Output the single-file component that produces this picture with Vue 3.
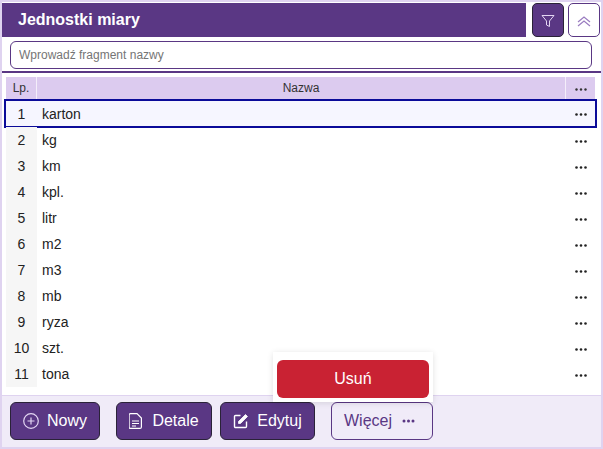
<template>
  <div class="window">
    <div class="top">
      <div class="title">Jednostki miary</div>
      <button class="icon-btn dark">
        <svg width="16" height="16" viewBox="0 0 16 16" fill="none" stroke="#e3d6f3" stroke-width="1">
          <path d="M2 3.500h12l-4.500 5.500v5.500l-3-1.500v-4z" />
        </svg>
      </button>
      <button class="icon-btn light">
        <svg width="16" height="16" viewBox="0 0 16 16" fill="none" stroke="#9a7cc0" stroke-width="1.200">
          <path d="M2 10l6-5 6 5M2 14l6-5 6 5" />
        </svg>
      </button>
    </div>
    <div class="search">
      <input class="search-input" placeholder="Wprowadź fragment nazwy" />
    </div>
    <div class="table">
      <div class="row head">
        <div class="cell lp">Lp.</div>
        <div class="cell name">Nazwa</div>
        <div class="cell more">
          <svg width="12" height="3" viewBox="0 0 12 3" fill="#333">
            <circle cx="1.500" cy="1.500" r="1.200" /><circle cx="6" cy="1.500" r="1.200" /><circle cx="10.500" cy="1.500" r="1.200" />
          </svg>
        </div>
      </div>
      <div v-for="(item, i) in items" :key="item" class="row" :class="{ selected: i === 0 }">
        <div class="cell lp">{{ i + 1 }}</div>
        <div class="cell name">{{ item }}</div>
        <div class="cell more">
          <svg width="12" height="3" viewBox="0 0 12 3" fill="#222">
            <circle cx="1.500" cy="1.500" r="1.300" /><circle cx="6" cy="1.500" r="1.300" /><circle cx="10.500" cy="1.500" r="1.300" />
          </svg>
        </div>
      </div>
    </div>
    <div class="footer">
      <button class="btn primary nowy">
        <svg width="16" height="16" viewBox="0 0 16 16" fill="none" stroke="#e3d6f3" stroke-width="1.200">
          <circle cx="8" cy="8" r="7.300" />
          <path d="M8 4.500v7M4.500 8h7" />
        </svg>
        Nowy
      </button>
      <button class="btn primary detale">
        <svg width="13" height="16" viewBox="0 0 13 16" fill="none" stroke="#fff" stroke-width="1.200">
          <path d="M1.500 .6h6.500l4.400 4.400v8.900a1.500 1.500 0 0 1-1.500 1.500h-9.400a1.500 1.500 0 0 1-1.400-1.500v-12.300a1.500 1.500 0 0 1 1.400-1z" />
          <path d="M3 8h7M3 10.500h7M3 13h4" />
        </svg>
        Detale
      </button>
      <button class="btn primary edytuj">
        <svg width="16" height="16" viewBox="0 0 16 16" fill="none" stroke="#fff" stroke-width="1.400">
          <path d="M13.500 8.500v5a1 1 0 0 1-1 1h-10a1 1 0 0 1-1-1v-10a1 1 0 0 1 1-1h5" />
          <path d="M5.500 10.500v-2l7-7 2 2-7 7z" fill="#fff" stroke-width="0.800" />
        </svg>
        Edytuj
      </button>
      <div class="more-wrap">
        <div class="menu">
          <button class="danger">Usuń</button>
        </div>
        <button class="btn outline">
          Więcej
          <svg width="13" height="4" viewBox="0 0 13 4" fill="#5a3784">
            <circle cx="2" cy="2" r="1.500" /><circle cx="6.500" cy="2" r="1.500" /><circle cx="11" cy="2" r="1.500" />
          </svg>
        </button>
      </div>
    </div>
  </div>
</template>

<script setup>
const items = ['karton', 'kg', 'km', 'kpl.', 'litr', 'm2', 'm3', 'mb', 'ryza', 'szt.', 'tona']
</script>

<style>
body {
  margin: 0;
  background: #fff;
}
</style>

<style scoped>
.window {
  width: 603px;
  height: 449px;
  box-sizing: border-box;
  border: 2px solid #dfd3f0;
  display: flex;
  flex-direction: column;
  font-family: "Liberation Sans", Arial, sans-serif;
  color: #222;
  background: #fff;
  overflow: hidden;
}

.top {
  display: flex;
  height: 35px;
  margin-top: 1px;
}

.title {
  width: 524px;
  height: 34px;
  background: #5a3784;
  color: #fff;
  font-size: 16px;
  font-weight: 700;
  line-height: 33px;
  padding-left: 16px;
  box-sizing: border-box;
}

.icon-btn {
  width: 32px;
  height: 34px;
  padding: 0;
  border-radius: 5px;
  display: flex;
  align-items: center;
  justify-content: center;
  box-sizing: border-box;
}

.icon-btn.dark {
  margin-left: 6px;
  background: #5a3784;
  border: 1px solid #2a2238;
}

.icon-btn.light {
  margin-left: 4px;
  background: #fff;
  border: 1px solid #5a3784;
}

.search {
  padding: 3px 8px 2px 8px;
  border-bottom: 2px solid #5a3784;
}

.search-input {
  display: block;
  width: 582px;
  height: 28px;
  box-sizing: border-box;
  border: 1px solid #5a3784;
  border-radius: 6px;
  padding: 0 8px;
  font-family: inherit;
  font-size: 12px;
  outline: none;
}

.search-input::placeholder {
  color: #757575;
}

.table {
  flex: 1;
  padding: 4px 0 0 4px;
}

.row {
  display: flex;
  height: 26px;
  align-items: center;
  font-size: 14px;
  width: 589px;
}

.row .cell {
  height: 100%;
  display: flex;
  align-items: center;
  box-sizing: border-box;
}

.lp {
  width: 31px;
  justify-content: center;
  background: #f6f6f6;
}

.name {
  flex: 1;
  padding-left: 5px;
}

.more {
  width: 30px;
  justify-content: center;
  padding: 2px 0 0 2px;
}

.row.head {
  height: 22px;
  font-size: 12px;
  color: #333;
}

.head .cell {
  background: #dccbef;
}

.head .lp {
  border-right: 1px solid #f4eefa;
}

.head .name {
  justify-content: center;
  padding: 0;
}

.head .more {
  border-left: 1px solid #f4eefa;
  padding: 2px 0 0;
}

.row.selected {
  box-sizing: border-box;
  height: 29px;
  width: 593px;
  margin-left: -2px;
  margin-bottom: -1px;
  border: 2px solid #0b0b99;
  background: #f6f6ff;
}

.selected .lp {
  background: transparent;
}

.footer {
  height: 52px;
  box-sizing: border-box;
  background: #f0ebf8;
  border-top: 1px solid #dfd3f0;
  display: flex;
  align-items: flex-start;
  padding: 6px 0 0 8px;
}

.btn {
  height: 38px;
  box-sizing: border-box;
  border-radius: 6px;
  font-family: inherit;
  font-size: 16px;
  display: flex;
  align-items: center;
  justify-content: center;
  gap: 8px;
  padding: 0;
}

.btn.primary {
  background: #5a3784;
  color: #fff;
  border: 1px solid #2a2238;
}

.nowy {
  width: 90px;
}

.detale {
  width: 96px;
  margin-left: 16px;
  gap: 10px;
}

.edytuj {
  width: 95px;
  margin-left: 8px;
}

.more-wrap {
  position: relative;
  margin-left: 16px;
}

.btn.outline {
  width: 102px;
  background: #f0ebf8;
  color: #5a3784;
  border: 1px solid #5a3784;
  justify-content: flex-start;
  padding-left: 12px;
  gap: 10px;
}

.menu {
  position: absolute;
  right: 0;
  bottom: 38px;
  width: 160px;
  height: 50px;
  box-sizing: border-box;
  background: #fff;
  padding: 8px 4px 4px 4px;
  box-shadow: 0 1px 6px rgba(0, 0, 0, 0.12);
}

.danger {
  display: block;
  width: 152px;
  height: 38px;
  border: none;
  border-radius: 6px;
  background: #c92233;
  color: #fff;
  font-family: inherit;
  font-size: 16px;
}
</style>
